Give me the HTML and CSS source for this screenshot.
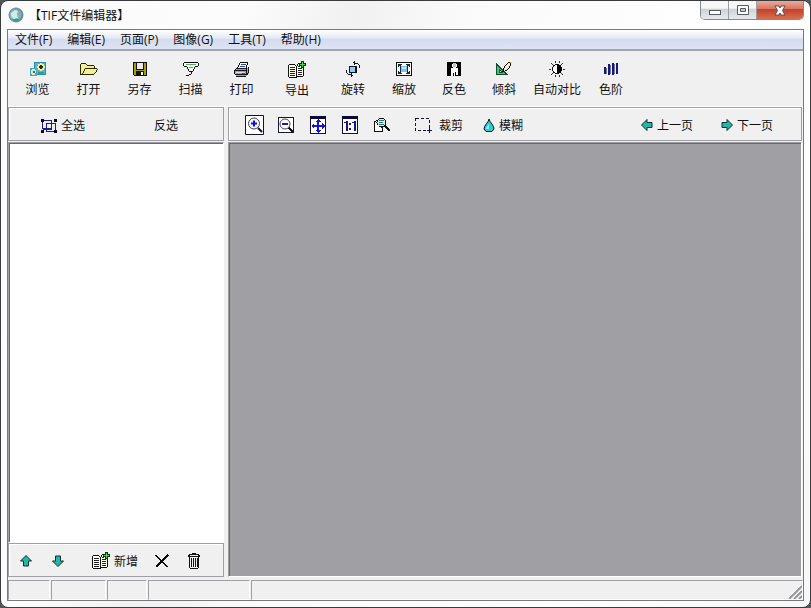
FILE: index.html
```html
<!DOCTYPE html>
<html lang="zh-CN">
<head>
<meta charset="utf-8">
<title>TIF文件编辑器</title>
<link rel="stylesheet" href="styles.css">
</head>
<body>
<svg class="symbols" width="0" height="0" aria-hidden="true">
  <symbol id="pages-add" viewBox="0 0 18 18">
    <path d="M1 4h6l2 1 1-2h6v12h-5l-2 2-1-1H1z" fill="#fffff0"/>
    <path d="M1 3h6v1H1zM0 4h1v12H0zM1 16h7v1H1zM7 4h1v1H7zM8 5h1v12H8zM9 3h1v2H9zM10 2h3v1h-3zM15 7h1v8h-1zM9 15h6v1H9z" fill="#111"/>
    <path d="M2 6h5v1H2zM2 8h5v1H2zM2 10h5v1H2zM2 12h5v1H2zM2 14h5v1H2zM10 5h2v1h-2zM10 7h4v1h-4zM10 9h4v1h-4zM10 11h4v1h-4zM10 13h4v1h-4z" fill="#222"/>
    <path d="M13 0h3v2h2v3h-2v2h-3V5h-2V2h2z" fill="#0b360c"/>
    <path d="M14 1h1v2h2v1h-2v2h-1V4h-2V3h2z" fill="#45dc3d"/>
  </symbol>
</svg>
<div class="window">
  <header class="titlebar">
    <svg class="app-icon" viewBox="0 0 16 16" aria-hidden="true"><defs><radialGradient id="globe" cx=".45" cy=".5" r=".6"><stop offset="0" stop-color="#e2f1ea"/><stop offset=".55" stop-color="#82b9c7"/><stop offset="1" stop-color="#416d96"/></radialGradient></defs><circle cx="8" cy="8" r="7" fill="url(#globe)" stroke="#6a8cab"/><path d="M3 6l4-3 3 1-1 4 1 3-4 1-3-3z" fill="#d3ebe2"/><path d="M10 4l3 2v4l-3 1-1-4z" fill="#84b3a8"/><path d="M4 13q5-3 8 0-4 3-8 0z" fill="#3d9d82"/></svg>
    <h1 class="title">【TIF文件编辑器】</h1>
    <div class="window-buttons">
      <button class="win-btn" aria-label="最小化"><svg width="14" height="14" viewBox="0 0 14 14"><rect x="1.500" y="7.500" width="11" height="4" fill="#fff" stroke="#565b68"/></svg></button>
      <button class="win-btn" aria-label="最大化"><svg width="14" height="14" viewBox="0 0 14 14"><path d="M1.500 2.500h11v9h-11z" fill="#fff" stroke="#565b68"/><path d="M4.500 5.500h5v3h-5z" fill="#c5c8ce" stroke="#565b68"/></svg></button>
      <button class="win-btn close" aria-label="关闭"><svg width="14" height="14" viewBox="0 0 14 14"><path d="M2 3h4l1 2 1-2h4L9.500 7.500 12 12H8L7 10 6 12H2l2.500-4.500z" fill="#fff" stroke="#6b4549"/></svg></button>
    </div>
  </header>

  <main class="client">
    <nav class="menubar">
      <button>文件(F)</button><button>编辑(E)</button><button>页面(P)</button><button>图像(G)</button><button>工具(T)</button><button>帮助(H)</button>
    </nav>

    <div class="toolbar">
      <button class="tool file-tool"><svg class="icon" viewBox="0 0 16 16"><path d="M4 1h12v13H4z" fill="#248fc2"/><path d="M5 2h10v11H5z" fill="#55b3d6"/><path d="M8 3h2V2h2v1h2v2h1v2h-1v2h-2v1h-2V9H8V7H7V5h1z" fill="#fff07a"/><path d="M10 4h2v1h1v2h-1v1h-2V7H9V5h1z" fill="#1e2a20"/><path d="M0 7h7v8H0z" fill="#4aa5ca"/><path d="M2 8h3v1h1v3H5v2H2v-1H1V9h1z" fill="#d5edc0"/><path d="M3 10h2v2H3z" fill="#25719b"/><path d="M8 11h6v2H8z" fill="#3b9c74"/></svg><span>浏览</span></button>
      <button class="tool file-tool"><svg class="icon wide" viewBox="0 0 18 16"><path d="M1 3h5l2 2h6v3h3l-4 6H1z" fill="#f4f18c"/><path d="M1 2h5v1H1zM0 3h1v11H0zM6 3h1v1H6zM7 4h7v1H7zM14 5h1v2h-1zM5 7h12v1H5zM4 8h1v2H4zM3 10h1v2H3zM2 12h1v1H2zM17 8h1v1h-1zM16 9h1v2h-1zM15 11h1v1h-1zM14 12h1v1h-1zM1 13h13v1H1z" fill="#29270a"/></svg><span>打开</span></button>
      <button class="tool file-tool"><svg class="icon" viewBox="0 0 16 16"><path d="M1 1h14v14H2l-1-1z" fill="#111"/><path d="M2 2h2v7h8V2h2v12h-2v-4H4v4H2z" fill="#a09f15"/><path d="M5 2h6v6H5z" fill="#ececec"/><path d="M9 11h2v3H9z" fill="#fff"/></svg><span>另存</span></button>
      <button class="tool file-tool"><svg class="icon" viewBox="0 0 16 16"><path d="M1 2h14v3l-3 1v3l-2 2H7L5 7 1 5z" fill="#fff"/><path d="M1 1h14v1H1zM0 2h1v3H0zM15 2h1v3h-1zM1 5h3v1H1zM12 5h3v1h-3zM4 6h1v2H4zM5 8h1v2H5zM6 10h4v1H6zM10 8h1v2h-1zM11 6h1v2h-1zM8 11h1v2H8zM6 13h2v1H6zM3 14h3v1H3z" fill="#111"/><path d="M3 3h10v1H3zM6 6h4v1H6z" fill="#4eb45a"/></svg><span>扫描</span></button>
      <button class="tool file-tool"><svg class="icon" viewBox="0 0 16 16"><path d="M6 1h8l-2 6H3z" fill="#fff"/><path d="M6 1h8v1H6zM5 2h1v2H5zM4 4h1v2H4zM3 6h1v1H3zM13 2h1v2h-1zM12 4h1v3h-1z" fill="#111"/><path d="M7 3h5v1H7zM6 5h5v1H6z" fill="#2644a4"/><path d="M2 7h13v5l-3 3H2l-2-2V9z" fill="#a5a1ac"/><path d="M2 7h11v1H2zM1 8h1v1H1zM0 9h12v1H0zM0 10h1v3H0zM1 13h11v1H1zM2 15h10v1H2zM12 8h1v6h-1zM14 6h1v6h-1zM13 12h1v2h-1z" fill="#17141b"/><path d="M2 11h9v1H2z" fill="#ddd"/><path d="M8 12h3v1H8z" fill="#8b3832"/></svg><span>打印</span></button>
      <button class="tool export-tool"><svg class="icon export"><use href="#pages-add"/></svg><span>导出</span></button>
      <button class="tool rotate-tool"><svg class="icon" viewBox="0 0 16 16"><path d="M5 5h6v6H5z" fill="#8fccef"/><path d="M4 5h8v1H4zM4 6h1v6H4zM5 11h7v1H5zM10 6h2v5h-2zM8 1h2v1H8zM9 0h1v4H9zM10 2h3v1h-3zM13 3h1v1h-1zM14 4h1v3h-1zM1 9h1v3H1zM2 12h1v1H2zM3 13h4v1H3zM6 12h1v4H6zM7 14h1v1H7z" fill="#101525"/></svg><span>旋转</span></button>
      <button class="tool image-tool"><svg class="icon" viewBox="0 0 16 16"><path d="M.5 1.500h15v13H.5z" fill="#fff" stroke="#111"/><path d="M2 3h4v1H5v1h6V4h-1V3h4v3h-1V5h-1v6h1v-1h1v3h-4v-1h1v-1H5v1h1v1H2v-3h1v1h1V5H3v1H2z" fill="#122b45"/><path d="M5 5h6v6H5z" fill="#86bfe3"/><path d="M6 6h4v2H6z" fill="#c4e5f4"/></svg><span>缩放</span></button>
      <button class="tool image-tool"><svg class="icon" viewBox="0 0 16 16"><path d="M1 1h14v14H1z"/><path d="M7 2h3v1h1v3h-1v1h2v7h-2v-3H9v4H8v-3H7v3H5V7h2V6H6V3h1z" fill="#fff"/><path d="M7 2h3v4H7z" fill="#c4c4c4"/></svg><span>反色</span></button>
      <button class="tool image-tool"><svg class="icon wide" viewBox="0 0 18 16"><path d="M1.500 3v10.500H12z" fill="#35ce62" stroke="#134c30"/><path d="M4 8v3h3z" fill="#a2efbd" stroke="#174e39"/><path d="M9 9V6l5-5 2 1v2l-4 5z" fill="#f2efcf"/><path d="M8 7h1v3H8zM9 5h1v2H9zM10 4h1v1h-1zM11 3h1v1h-1zM12 2h1v1h-1zM13 1h2v1h-2zM15 2h1v3h-1zM14 5h1v2h-1zM13 7h1v1h-1zM12 8h1v1h-1zM10 9h2v1h-2zM7 10h2v1H7z" fill="#111"/><path d="M15 1h2v1h-2z" fill="#ded535"/></svg><span>倾斜</span></button>
      <button class="tool contrast-tool"><svg class="icon" viewBox="0 0 16 16"><circle cx="8" cy="8" r="4.500" fill="#fff" stroke="#111"/><path d="M8 3a5 5 0 010 10z"/><path d="M6 0v2M10 0v2M6 14v2M10 14v2M0 8h2M14 8h2M2 2l2 2M14 2l-2 2M2 14l2-2M14 14l-2-2" stroke="#333"/></svg><span>自动对比</span></button>
      <button class="tool rotate-tool"><svg class="icon" viewBox="0 0 16 16"><path d="M1 6h2v7H1zM5 3h2v11H5zM9 2h2v12H9zM13 2h2v11h-2z" fill="#18187b"/><path d="M3 7h1v6H3zM7 4h1v9H7zM11 3h1v10h-1z" fill="#777790"/></svg><span>色阶</span></button>
    </div>

    <div class="workspace">
      <aside class="sidebar">
        <div class="subbar select-bar">
          <button class="command"><svg class="icon" viewBox="0 0 16 16"><path d="M1.500 2.500h9v8h-9zM5.500 5.500h9v8h-9z" fill="#f0f0f0" stroke="#1d1d83"/><path d="M10 3v8H2" fill="none" stroke="#1d1d83"/><path d="M0 1h3v3H0zM13 1h3v3h-3zM0 12h3v3H0zM13 12h3v3h-3z" fill="#080827"/></svg><span>全选</span></button>
          <button class="command">反选</button>
        </div>
        <div class="page-list" aria-label="页面列表"></div>
        <div class="subbar page-bar">
          <button class="command" aria-label="上移"><svg class="arrow" viewBox="0 0 12 12"><path d="M6 .5L11.500 6H8.500v5h-5V6H.5z" fill="#21b6a8" stroke="#102f2d"/></svg></button>
          <button class="command" aria-label="下移"><svg class="arrow" viewBox="0 0 12 12"><path d="M6 11.500L.5 6h3V1h5v5h3z" fill="#21b6a8" stroke="#102f2d"/></svg></button>
          <button class="command add"><svg class="icon export"><use href="#pages-add"/></svg><span>新增</span></button>
          <button class="command" aria-label="删除"><svg class="icon" viewBox="0 0 16 16"><path d="M2 2l11 12M14 2L2 14" fill="none" stroke="#080808" stroke-width="1.500"/></svg></button>
          <button class="command" aria-label="清空"><svg class="icon" viewBox="0 0 16 16"><path d="M6 0h4v1h3v1h1v2H2V2h1V1h3z" fill="#111"/><path d="M4 2h8v1H4z" fill="#eee"/><path d="M3 4h1v11H3zM12 4h1v11h-1zM4 15h8v1H4zM5 5h1v9H5zM7 5h1v9H7zM9 5h1v9H9zM11 5h1v9h-1z" fill="#111"/></svg></button>
        </div>
      </aside>

      <section class="viewer">
        <div class="subbar view-bar">
          <div class="view-tools">
            <button class="command" aria-label="放大"><svg class="zoom-in" viewBox="0 0 20 20"><path d="M.5.5h18v19H.5z" fill="#fff" stroke="#101038"/><circle cx="9" cy="8.500" r="5.500" fill="#f5f5ff" stroke="#44444b"/><path d="M6 8.500h6M9 5.500v6" stroke="#1010d0" stroke-width="2"/><path d="M13 13l4 4" stroke="#111" stroke-width="2"/></svg></button>
            <button class="command" aria-label="缩小"><svg class="icon" viewBox="0 0 16 16"><path d="M.5.5h15v15H.5z" fill="#fff" stroke="#15153f"/><circle cx="7" cy="7" r="5" fill="#fff" stroke="#44444b" shape-rendering="auto"/><path d="M4 6h6v2H4z" fill="#1919bd"/><path d="M11 11l4 4" stroke="#111" stroke-width="2"/></svg></button>
            <button class="command" aria-label="适应窗口"><svg class="fit" viewBox="0 0 16 18"><path d="M.5.5h15v17H.5z" fill="#fff" stroke="#101040"/><path d="M0 0h16v3H0z" fill="#08083a"/><path d="M7 6H5l3-3 3 3H9v3h3V7l3 3-3 3v-2H9v3h2l-3 3-3-3h2v-3H4v2l-3-3 3-3v2h3z" fill="#1515ce"/></svg></button>
            <button class="command" aria-label="实际大小"><svg class="fit" viewBox="0 0 16 18"><path d="M.5.5h15v17H.5z" fill="#fff" stroke="#101040"/><path d="M0 0h16v3H0z" fill="#08083a"/><path d="M4 5h2v10H4V7H2V6h2zM12 5h2v10h-2V7h-2V6h2zM7 7h2v2H7zM7 12h2v2H7z" fill="#15158e"/></svg></button>
            <button class="command" aria-label="预览"><svg class="icon" viewBox="0 0 16 16"><path d="M.5 14.500V5l3-2h5v11.500z" fill="#fff" stroke="#111"/><circle cx="7.500" cy="5.500" r="4.500" fill="#d6eeec" stroke="#111"/><path d="M5 3h5v1H5zM5 5h4v1H5zM5 7h5v1H5z" fill="#267778"/><path d="M11 9l5 5" stroke="#111" stroke-width="2"/></svg></button>
          </div>
          <button class="command crop"><svg class="crop-icon" viewBox="0 0 18 16"><path d="M.5 1.500h14v12H.5z" fill="none" stroke="#111133" stroke-dasharray="3 2"/><path d="M12 13.500h5M14.500 11v5" stroke="#101044"/></svg><span>裁剪</span></button>
          <button class="command blur"><svg class="drop" viewBox="0 0 12 16"><path d="M6 2C6 5 1 8 1 12l2 2.500h6l2-2.500C11 8 7 6 6 2z" fill="#22d0da" stroke="#111"/><path d="M3 11l3-4v5H3z" fill="#8ceeed"/></svg><span>模糊</span></button>
          <div class="page-nav">
            <button class="command"><svg class="arrow" viewBox="0 0 12 12"><path d="M.5 6L6 .5v3h5v5H6v3z" fill="#21b6a8" stroke="#102f2d"/></svg><span>上一页</span></button>
            <button class="command"><svg class="arrow" viewBox="0 0 12 12"><path d="M11.500 6L6 .5v3H1v5h5v3z" fill="#21b6a8" stroke="#102f2d"/></svg><span>下一页</span></button>
          </div>
        </div>
        <div class="canvas" aria-label="图像预览"></div>
      </section>
    </div>

    <footer class="statusbar">
      <div></div><div></div><div></div><div></div>
      <div class="last-status"><svg class="grip" viewBox="0 0 14 14"><path d="M1 14L14 1M6 14l8-8M11 14l3-3" stroke="#96969b" stroke-width="2"/><path d="M0 13L13 0M5 13l8-8" stroke="#fff"/></svg></div>
    </footer>
  </main>
</div>
</body>
</html>
```
FILE: styles.css
```css
* { box-sizing: border-box; }
body {
  margin: 0;
  background: #535556;
  color: #111;
  font: 12px/16px "Open Sans", "Noto Sans CJK SC", sans-serif;
}
button {
  margin: 0;
  padding: 0;
  border: 0;
  background: transparent;
  color: inherit;
  font: inherit;
  white-space: nowrap;
}
svg { display: block; flex: none; }
.symbols { display: none; }

.window {
  display: flex;
  flex-direction: column;
  height: 100vh;
  padding: 0 6px 6px;
  border: 1px solid #393b3c;
  border-radius: 8px;
  background: linear-gradient(110deg, #fafafa 0, #fcfcfc 23%, #f1f1f1 35%, #fafafa 45%, #fff 75%, #f7f7f7 100%);
}
.titlebar {
  display: flex;
  align-items: center;
  height: 28px;
  flex: none;
}
.app-icon { width: 16px; height: 16px; margin-left: 1px; }
.title { margin: 0 0 0 5px; padding-top: 1px; font-size: 12px; font-weight: 400; }
.window-buttons {
  display: flex;
  align-self: flex-start;
  height: 19px;
  margin-left: auto;
  border: 1px solid #858990;
  border-top: 0;
  border-radius: 0 0 5px 5px;
  overflow: hidden;
}
.win-btn {
  display: grid;
  place-items: center;
  width: 28px;
  border-right: 1px solid #999da4;
  background: linear-gradient(#f7f7f8 0 40%, #cfd1d5 45%, #e8e9eb);
}
.win-btn.close {
  width: 46px;
  border: 0;
  background: linear-gradient(#eba99a 0, #d77863 43%, #c3412a 46%, #d56e50);
}
.client {
  display: flex;
  flex: 1;
  flex-direction: column;
  min-height: 0;
  border: 1px solid #77797d;
  background: #f0f0f0;
}
.menubar {
  display: flex;
  flex: none;
  gap: 15px;
  height: 21px;
  padding: 1px 7px 0;
  border-bottom: 2px solid #a3a4ac;
  background: linear-gradient(#fff, #e7ebf6 40%, #d5dcef 50%, #dce3f3);
}
.toolbar {
  display: flex;
  flex: none;
  height: 56px;
  padding: 10px 4px 0;
  border-bottom: 1px solid #fff;
}
.tool {
  display: flex;
  flex: none;
  flex-direction: column;
  align-items: center;
  gap: 5px;
  height: 38px;
}
.file-tool { width: 51px; }
.export-tool { width: 60px; gap: 4px; }
.rotate-tool { width: 52px; }
.image-tool { width: 50px; }
.contrast-tool { width: 56px; }
.icon { width: 16px; height: 16px; shape-rendering: crispEdges; }
.icon.wide { width: 18px; }
.icon.export { width: 18px; height: 18px; }
.fit { width: 16px; height: 18px; shape-rendering: crispEdges; }
.crop-icon { width: 18px; height: 16px; shape-rendering: crispEdges; }

.workspace { display: flex; flex: 1; gap: 4px; min-height: 0; }
.sidebar { display: flex; flex: 0 0 216px; flex-direction: column; }
.viewer { display: flex; flex: 1; flex-direction: column; min-width: 0; margin-right: 1px; }
.subbar {
  display: flex;
  align-items: center;
  flex: none;
  height: 34px;
  border: 1px solid #a0a0a4;
  box-shadow: inset 1px 1px #fff;
}
.command { display: flex; align-items: center; gap: 4px; }
.command span { padding-top: 1px; }
.select-bar { gap: 69px; padding: 3px 32px 0; }
.page-list, .canvas {
  flex: 1;
  min-height: 0;
  margin-top: 1px;
  border: 1px solid #a0a0a4;
  border-right-color: #fff;
  border-bottom-color: #fff;
  box-shadow: inset 1px 1px #696969;
}
.page-list { background: #fff; }
.canvas { background: #a0a0a4; }
.page-bar { gap: 16px; padding: 2px 11px 0; }
.page-bar .command:nth-child(2) { margin-left: 4px; }
.page-bar .add { margin-left: 12px; }
.arrow { width: 12px; height: 12px; }
.view-bar { padding: 2px 28px 0 16px; }
.view-tools { display: flex; align-items: center; gap: 16px; }
.view-tools .command:first-child { margin-right: -3px; }
.zoom-in { width: 20px; height: 20px; }
.crop { margin-left: 25px; gap: 6px; }
.blur { margin-left: 20px; }
.drop { width: 12px; height: 16px; }
.page-nav { display: flex; gap: 28px; margin-left: auto; }

.statusbar {
  display: grid;
  grid-template-columns: 42px 55px 40px 102px 1fr;
  flex: none;
  gap: 1px;
  height: 23px;
  padding-top: 3px;
}
.statusbar div {
  border-top: 1px solid #a0a0a4;
  border-left: 1px solid #a0a0a4;
  border-right: 1px solid #fff;
  border-bottom: 1px solid #fff;
}
.statusbar .last-status { display: flex; align-items: flex-end; justify-content: flex-end; }
.grip { width: 14px; height: 14px; }
```
